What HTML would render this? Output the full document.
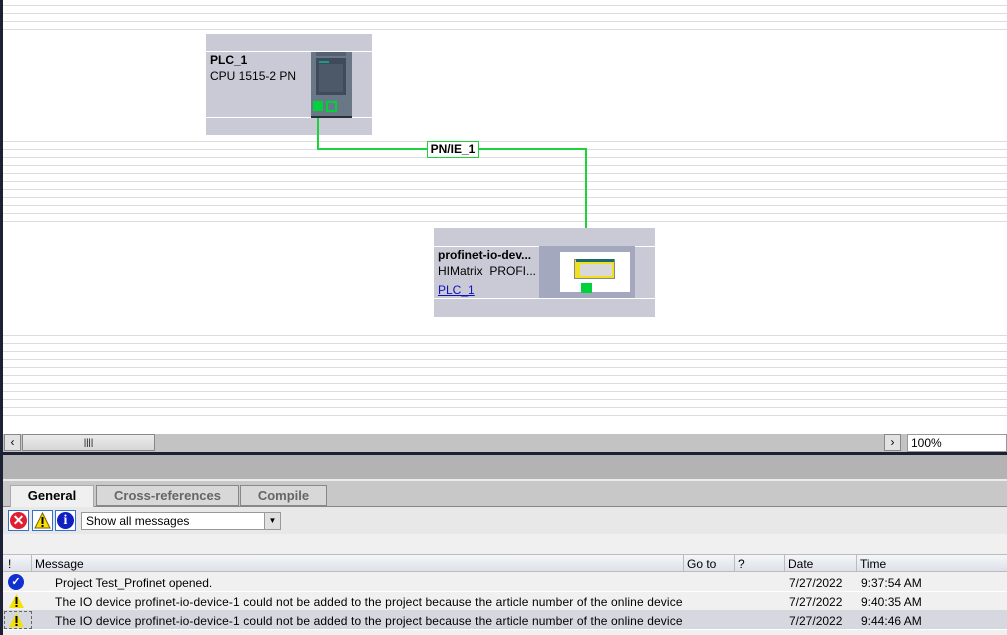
<!DOCTYPE html>
<html><head><meta charset="utf-8"><style>
*{margin:0;padding:0;box-sizing:border-box}
body{width:1007px;height:635px;overflow:hidden;position:relative;background:#fff;font-family:"Liberation Sans",sans-serif;font-size:12px;color:#000}
.a{position:absolute}
.ln{position:absolute;left:3px;right:0;height:1px;background:#dcdcdc}
.txt{font-size:12px;white-space:nowrap}
</style></head><body>
<div class="a" style="left:0;top:0;width:3px;height:635px;background:#1c2233;z-index:5"></div>

<div class="ln" style="top:5px"></div><div class="ln" style="top:13px"></div><div class="ln" style="top:21px"></div><div class="ln" style="top:29px"></div>
<div class="ln" style="top:141px"></div><div class="ln" style="top:149px"></div><div class="ln" style="top:157px"></div><div class="ln" style="top:165px"></div><div class="ln" style="top:173px"></div><div class="ln" style="top:181px"></div><div class="ln" style="top:189px"></div><div class="ln" style="top:197px"></div><div class="ln" style="top:205px"></div><div class="ln" style="top:213px"></div><div class="ln" style="top:221px"></div>
<div class="ln" style="top:335px"></div><div class="ln" style="top:343px"></div><div class="ln" style="top:351px"></div><div class="ln" style="top:359px"></div><div class="ln" style="top:367px"></div><div class="ln" style="top:375px"></div><div class="ln" style="top:383px"></div><div class="ln" style="top:391px"></div><div class="ln" style="top:399px"></div><div class="ln" style="top:407px"></div><div class="ln" style="top:415px"></div>

<!-- PLC_1 box -->
<div class="a" style="left:206px;top:34px;width:166px;height:101px;background:#c9cad6"></div>
<div class="a" style="left:206px;top:51px;width:166px;height:1px;background:#fff"></div>
<div class="a" style="left:206px;top:117px;width:166px;height:1px;background:#fff"></div>
<div class="a txt" style="left:210px;top:53px;font-weight:bold">PLC_1</div>
<div class="a txt" style="left:210px;top:69px">CPU 1515-2 PN</div>
<div class="a" style="left:311px;top:52px;width:41px;height:65px;background:#6a7787"></div>
<div class="a" style="left:316px;top:52px;width:30px;height:4px;background:#556070"></div>
<div class="a" style="left:316px;top:58px;width:30px;height:37px;background:#3f4a5a"></div>
<div class="a" style="left:319px;top:61px;width:10px;height:2px;background:#1a9a8a"></div>
<div class="a" style="left:319px;top:64px;width:24px;height:28px;background:#4d5869"></div>
<div class="a" style="left:313px;top:101px;width:10px;height:10px;background:#00d23c"></div>
<div class="a" style="left:326px;top:101px;width:11px;height:11px;border:2px solid #00d23c"></div>
<div class="a" style="left:311px;top:116px;width:41px;height:2px;background:#2a303a"></div>

<!-- network line -->
<div class="a" style="left:317px;top:118px;width:2px;height:32px;background:#1ed23c"></div>
<div class="a" style="left:317px;top:148px;width:270px;height:2px;background:#1ed23c"></div>
<div class="a" style="left:585px;top:148px;width:2px;height:98px;background:#1ed23c"></div>
<div class="a" style="left:427px;top:141px;width:52px;height:17px;background:#fff;border:1px solid #1ed23c;font-weight:bold;font-size:12px;text-align:center;line-height:15px">PN/IE_1</div>

<!-- device box -->
<div class="a" style="left:434px;top:228px;width:221px;height:89px;background:#c9cad6"></div>
<div class="a" style="left:434px;top:246px;width:221px;height:1px;background:#fff"></div>
<div class="a" style="left:434px;top:298px;width:221px;height:1px;background:#fff"></div>
<div class="a txt" style="left:438px;top:248px;font-weight:bold">profinet-io-dev...</div>
<div class="a txt" style="left:438px;top:264px">HIMatrix&nbsp; PROFI...</div>
<div class="a txt" style="left:438px;top:283px;color:#1010c0;text-decoration:underline">PLC_1</div>
<div class="a" style="left:539px;top:246px;width:96px;height:52px;background:#a3a8bf"></div>
<div class="a" style="left:560px;top:252px;width:70px;height:40px;background:#fff"></div>
<div class="a" style="left:574px;top:259px;width:41px;height:20px;background:#f0e020;border:1px solid #888"></div>
<div class="a" style="left:580px;top:264px;width:32px;height:12px;background:#d8d8d8"></div>
<div class="a" style="left:576px;top:259px;width:38px;height:3px;background:#1a6a6a"></div>
<div class="a" style="left:581px;top:283px;width:11px;height:10px;background:#00d23c"></div>

<!-- scrollbar row -->
<div class="a" style="left:3px;top:434px;width:1004px;height:18px;background:#c3c3c3"></div>
<div class="a" style="left:4px;top:434px;width:17px;height:17px;background:#e2e2e2;border:1px solid #888;font-size:12px;text-align:center;line-height:15px">&lsaquo;</div>
<div class="a" style="left:22px;top:434px;width:133px;height:17px;background:linear-gradient(#ececec,#d6d6d6);border:1px solid #888;font-size:9px;text-align:center;line-height:15px">||||</div>
<div class="a" style="left:884px;top:434px;width:17px;height:17px;background:#e2e2e2;border:1px solid #888;font-size:12px;text-align:center;line-height:15px">&rsaquo;</div>
<div class="a" style="left:907px;top:434px;width:100px;height:18px;background:#fff;border:1px solid #999;padding-left:3px;line-height:16px">100%</div>
<div class="a" style="left:0;top:452px;width:1007px;height:3px;background:#1c2233"></div>

<!-- panel -->
<div class="a" style="left:3px;top:455px;width:1004px;height:24px;background:#b3b3b3"></div>
<div class="a" style="left:3px;top:479px;width:1004px;height:2px;background:#ececec"></div>
<div class="a" style="left:3px;top:481px;width:1004px;height:25px;background:#c8c8c8"></div>
<div class="a" style="left:3px;top:506px;width:1004px;height:1px;background:#888"></div>
<div class="a" style="left:10px;top:485px;width:84px;height:22px;background:#f0f0f0;border:1px solid #aaa;border-bottom:none;font-size:13px;font-weight:bold;text-align:center;line-height:20px">General</div>
<div class="a" style="left:96px;top:485px;width:143px;height:21px;background:#d8d8d8;border:1px solid #888;font-size:13px;font-weight:bold;color:#666;text-align:center;line-height:19px">Cross-references</div>
<div class="a" style="left:240px;top:485px;width:87px;height:21px;background:#d8d8d8;border:1px solid #888;font-size:13px;font-weight:bold;color:#666;text-align:center;line-height:19px">Compile</div>
<div class="a" style="left:3px;top:507px;width:1004px;height:27px;background:#e8e8e8"></div>
<div class="a" style="left:3px;top:534px;width:1004px;height:20px;background:#f0f0f0"></div>

<!-- toolbar icons -->
<div class="a" style="left:8px;top:510px;width:21px;height:21px;border:1px solid #3070d0;background:#fff"></div>
<div class="a" style="left:10px;top:512px;width:17px;height:17px;border-radius:50%;background:#e02030;color:#fff;font-weight:bold;font-size:14px;text-align:center;line-height:17px">✕</div>
<div class="a" style="left:32px;top:510px;width:21px;height:21px;border:1px solid #3070d0;background:#fff"></div>
<svg class="a" style="left:34px;top:512px" width="17" height="17"><polygon points="8.5,1 16,16 1,16" fill="#f5e000" stroke="#806000"/><rect x="7.5" y="5" width="2" height="7" fill="#000"/><rect x="7.5" y="13" width="2" height="2" fill="#000"/></svg>
<div class="a" style="left:55px;top:510px;width:21px;height:21px;border:1px solid #3070d0;background:#fff"></div>
<div class="a" style="left:57px;top:512px;width:17px;height:17px;border-radius:50%;background:#1020c0;color:#fff;font-weight:bold;font-size:14px;text-align:center;line-height:17px;font-family:'Liberation Serif',serif">i</div>
<div class="a" style="left:81px;top:512px;width:200px;height:18px;background:#fff;border:1px solid #999;padding-left:4px;line-height:16px">Show all messages</div>
<div class="a" style="left:264px;top:513px;width:16px;height:16px;background:#e0e0e0;border-left:1px solid #999;font-size:8px;text-align:center;line-height:16px">▼</div>

<!-- table header -->
<div class="a" style="left:3px;top:554px;width:1004px;height:18px;background:linear-gradient(#f4f6f9,#dde1e8);border-top:1px solid #bbb;border-bottom:1px solid #bbb"></div>
<div class="a txt" style="left:8px;top:557px">!</div>
<div class="a" style="left:31px;top:555px;width:1px;height:17px;background:#bbb"></div>
<div class="a txt" style="left:35px;top:557px">Message</div>
<div class="a" style="left:683px;top:555px;width:1px;height:17px;background:#bbb"></div>
<div class="a txt" style="left:687px;top:557px">Go to</div>
<div class="a" style="left:734px;top:555px;width:1px;height:17px;background:#bbb"></div>
<div class="a txt" style="left:738px;top:557px">?</div>
<div class="a" style="left:784px;top:555px;width:1px;height:17px;background:#bbb"></div>
<div class="a txt" style="left:788px;top:557px">Date</div>
<div class="a" style="left:856px;top:555px;width:1px;height:17px;background:#bbb"></div>
<div class="a txt" style="left:860px;top:557px">Time</div>

<!-- rows -->
<div class="a" style="left:3px;top:572px;width:1004px;height:63px;background:#f0f0f0"></div>
<div class="a" style="left:3px;top:591px;width:1004px;height:1px;background:#fff"></div>
<div class="a" style="left:3px;top:610px;width:1004px;height:19px;background:#d5d9df"></div>
<div class="a" style="left:3px;top:629px;width:1004px;height:1px;background:#fff"></div>

<div class="a" style="left:8px;top:574px;width:16px;height:16px;border-radius:50%;background:#1030d0;color:#fff;font-size:11px;text-align:center;line-height:16px;font-weight:bold">✓</div>
<svg class="a" style="left:8px;top:593px" width="17" height="16"><polygon points="8.5,1 16,15 1,15" fill="#f5e000"/><rect x="7.5" y="4" width="2" height="7" fill="#000"/><rect x="7.5" y="12" width="2" height="2" fill="#000"/></svg>
<div class="a" style="left:4px;top:611px;width:28px;height:18px;border:1px dashed #666"></div>
<svg class="a" style="left:8px;top:612px" width="17" height="16"><polygon points="8.5,1 16,15 1,15" fill="#f5e000"/><rect x="7.5" y="4" width="2" height="7" fill="#000"/><rect x="7.5" y="12" width="2" height="2" fill="#000"/></svg>

<div class="a txt" style="left:55px;top:576px">Project Test_Profinet opened.</div>
<div class="a txt" style="left:55px;top:595px;letter-spacing:0.12px">The IO device profinet-io-device-1 could not be added to the project because the article number of the online device</div>
<div class="a txt" style="left:55px;top:614px;letter-spacing:0.12px">The IO device profinet-io-device-1 could not be added to the project because the article number of the online device</div>
<div class="a txt" style="left:789px;top:576px">7/27/2022</div>
<div class="a txt" style="left:861px;top:576px">9:37:54 AM</div>
<div class="a txt" style="left:789px;top:595px">7/27/2022</div>
<div class="a txt" style="left:861px;top:595px">9:40:35 AM</div>
<div class="a txt" style="left:789px;top:614px">7/27/2022</div>
<div class="a txt" style="left:861px;top:614px">9:44:46 AM</div>
</body></html>
